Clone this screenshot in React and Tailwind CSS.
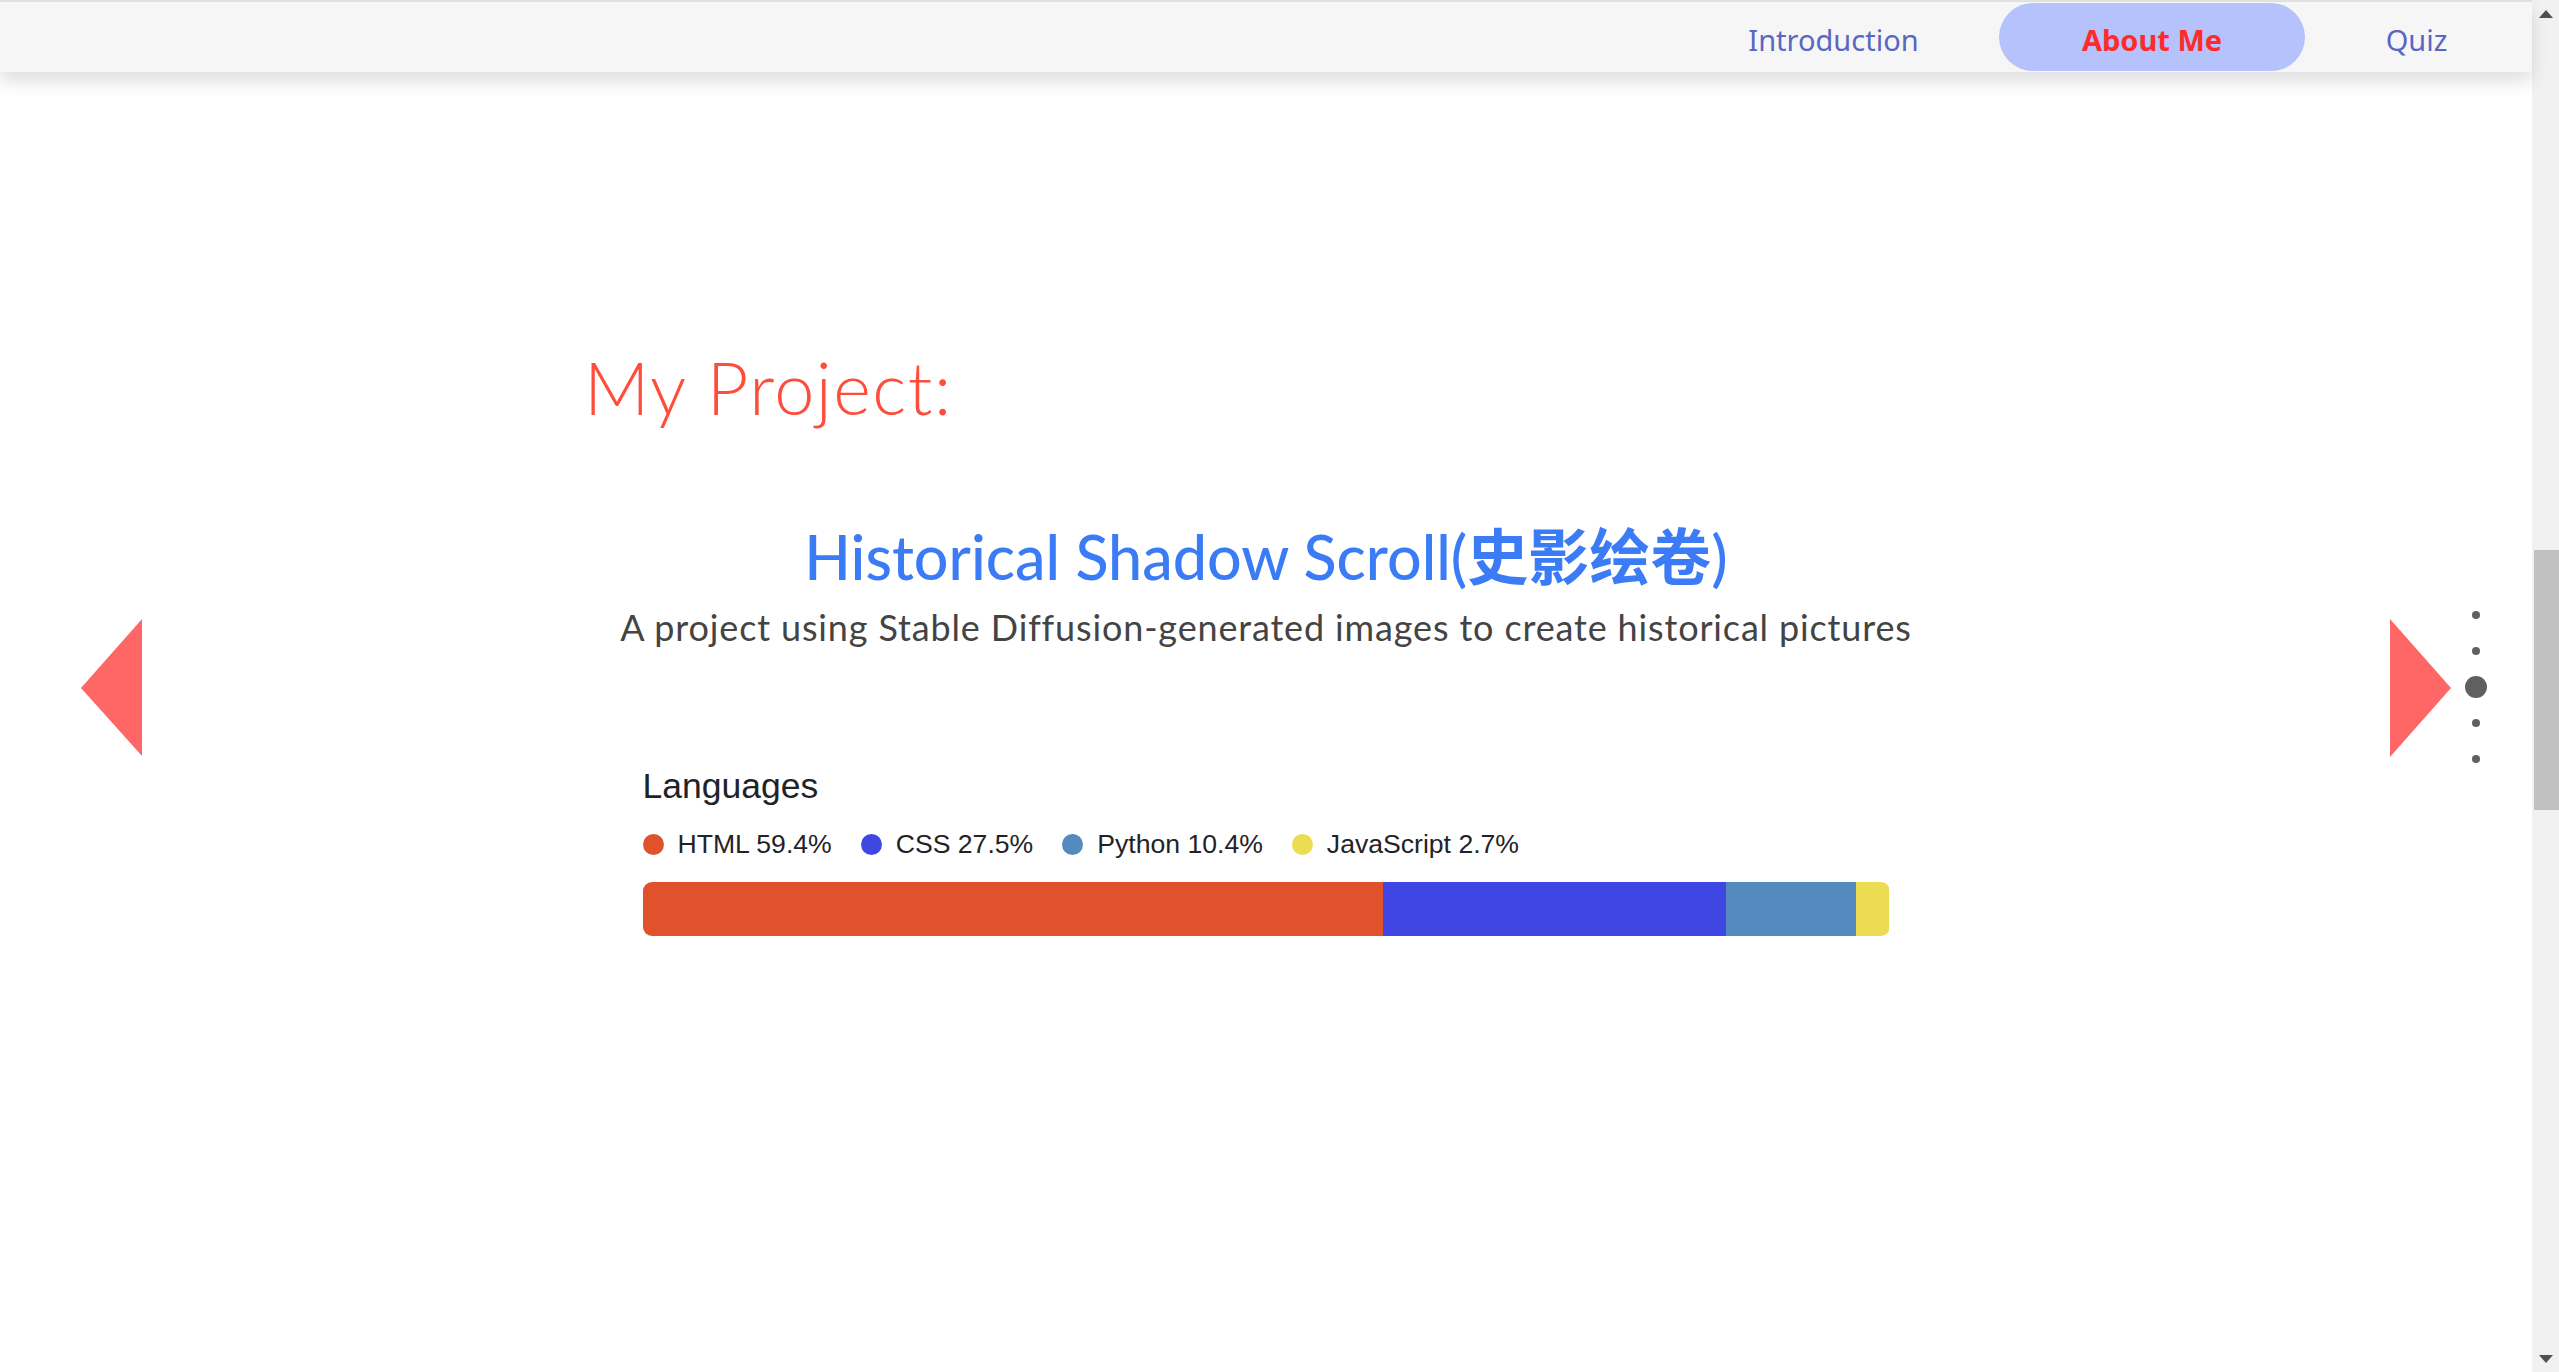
import React from "react";

const langs = [
  { name: "HTML", pct: 59.4, color: "bg-[#e0522c]" },
  { name: "CSS", pct: 27.5, color: "bg-[#3f46e2]" },
  { name: "Python", pct: 10.4, color: "bg-[#548abd]" },
  { name: "JavaScript", pct: 2.7, color: "bg-[#ecdc52]" },
];

function Header() {
  return (
    <header className="h-[72px] shrink-0 border-t-2 border-[#e0e0e0] bg-[#f6f6f6] shadow-[0_10px_16px_rgba(0,0,0,0.12)] flex items-center justify-end pr-[4px] relative z-10 font-['Noto_Sans',sans-serif] text-[29px]">
      <nav className="flex items-center">
        <a className="w-[331px] h-[68px] pt-[5px] flex items-center justify-center text-[#5a66c2]">Introduction</a>
        <a className="w-[306px] h-[68px] pt-[5px] flex items-center justify-center rounded-full bg-[#b5c2fc] text-[#ff2b2b] font-bold">About Me</a>
        <a className="w-[223px] h-[68px] pt-[5px] flex items-center justify-center text-[#5a66c2]">Quiz</a>
      </nav>
    </header>
  );
}

function Scrollbar() {
  return (
    <div className="w-[27px] h-full bg-[#f1f1f1] flex flex-col items-stretch shrink-0">
      <div className="h-[27px] flex items-center justify-center">
        <svg width="14" height="8" viewBox="0 0 14 8"><polygon points="7,0 14,8 0,8" fill="#505050" /></svg>
      </div>
      <div className="h-[523px]" />
      <div className="h-[260px] ml-[2px] bg-[#c1c1c1]" />
      <div className="flex-1" />
      <div className="h-[27px] flex items-center justify-center">
        <svg width="14" height="8" viewBox="0 0 14 8"><polygon points="0,0 14,0 7,8" fill="#505050" /></svg>
      </div>
    </div>
  );
}

export default function App() {
  return (
    <div className="w-full h-[1372px] flex bg-white overflow-hidden">
      <div className="flex-1 relative flex flex-col">
        <Header />
        <main className="flex flex-col items-center">
          <h2 className="w-[1364px] mt-[279px] text-[72px] leading-none font-light tracking-[1.5px] text-[#ff4c3b] font-['Lato',sans-serif]">
            My Project:
          </h2>
          <h3 className="mt-[100px] text-[61px] leading-none font-medium text-[#3b7cf6] font-['Lato','Noto_Sans_CJK_SC',sans-serif]">
            Historical Shadow Scroll(<span className="font-bold font-['Noto_Sans_CJK_SC',sans-serif]">史影绘卷</span>)
          </h3>
          <p className="mt-[22px] text-[36px] leading-none tracking-[0.85px] text-[#444444] font-['Lato',sans-serif]">
            A project using Stable Diffusion-generated images to create historical pictures
          </p>
          <div className="w-[1247px] mt-[124px] font-['Liberation_Sans',Arial,sans-serif] text-[#1f2328]">
            <div className="text-[35.5px] leading-none">Languages</div>
            <div className="mt-[27px] flex items-center gap-[29px] text-[26.6px] leading-none h-[26px]">
              {langs.map((l) => (
                <div key={l.name} className="flex items-center gap-[14px]">
                  <span className={`w-[21px] h-[21px] rounded-full ${l.color}`} />
                  <span>
                    {l.name} {l.pct}%
                  </span>
                </div>
              ))}
            </div>
            <div className="mt-[24px] h-[54px] rounded-[9px] overflow-hidden flex">
              {langs.map((l) => (
                <div key={l.name} className={`h-full ${l.color}`} style={{ width: `${l.pct}%` }} />
              ))}
            </div>
          </div>
        </main>

        <svg className="absolute left-[81px] top-[619px]" width="61" height="137" viewBox="0 0 61 137">
          <polygon points="61,0 61,137 0,69" fill="#ff6666" />
        </svg>
        <svg className="absolute left-[2390px] top-[619px]" width="61" height="138" viewBox="0 0 61 138">
          <polygon points="0,0 0,138 61,69" fill="#ff6666" />
        </svg>

        <div className="absolute left-[2465px] top-[604px] w-[22px] h-[166px] flex flex-col items-center justify-between">
          <div className="h-[22px] flex items-center"><span className="w-[8px] h-[8px] rounded-full bg-[#606060]" /></div>
          <div className="h-[22px] flex items-center"><span className="w-[8px] h-[8px] rounded-full bg-[#606060]" /></div>
          <div className="h-[22px] flex items-center"><span className="w-[22px] h-[22px] rounded-full bg-[#606060]" /></div>
          <div className="h-[22px] flex items-center"><span className="w-[8px] h-[8px] rounded-full bg-[#606060]" /></div>
          <div className="h-[22px] flex items-center"><span className="w-[8px] h-[8px] rounded-full bg-[#606060]" /></div>
        </div>
      </div>
      <Scrollbar />
    </div>
  );
}
